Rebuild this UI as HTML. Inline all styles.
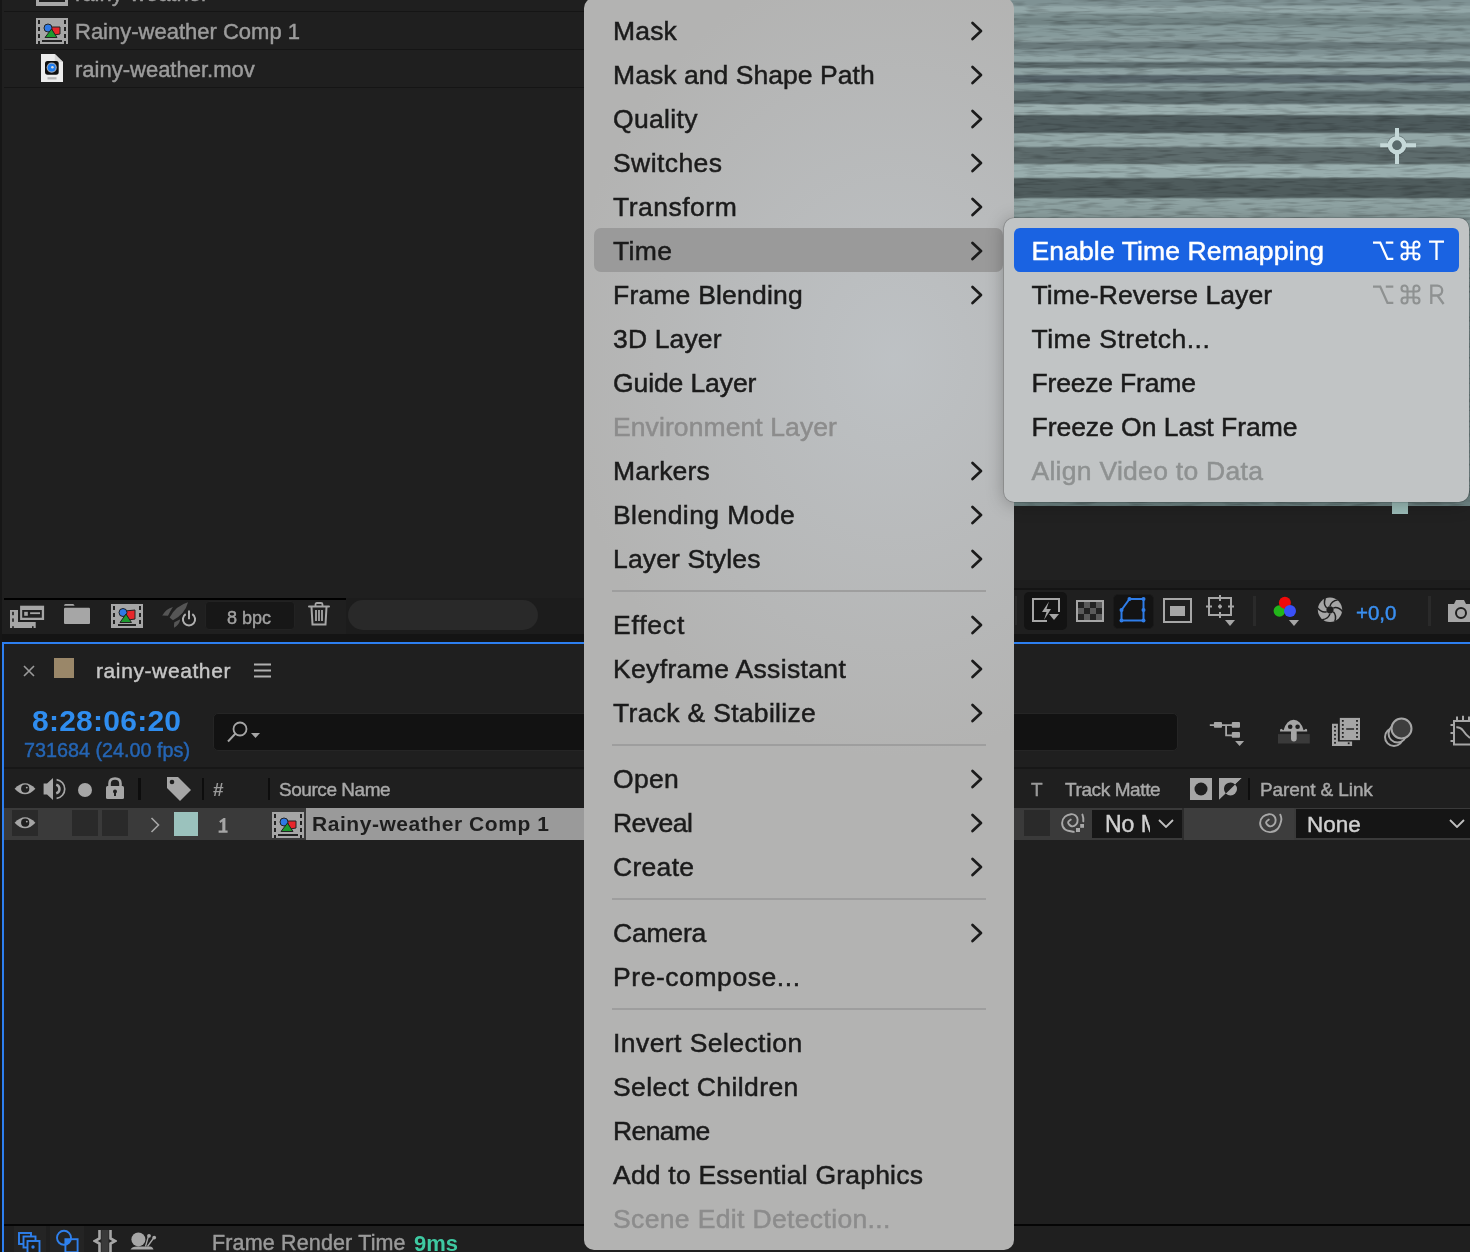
<!DOCTYPE html>
<html><head><meta charset="utf-8">
<style>
*{margin:0;padding:0;box-sizing:border-box}
html,body{width:1470px;height:1252px;overflow:hidden;background:#1f1f1f;font-family:"Liberation Sans",sans-serif}
body{will-change:transform}
.a{position:absolute}
.t{position:absolute;white-space:pre;line-height:1;-webkit-text-stroke:0.45px currentColor}
/* main menu */
#menu{position:absolute;left:584px;top:-2px;width:430px;height:1252px;border-radius:10px;background:radial-gradient(ellipse 330px 400px at 310px 360px,rgba(190,194,197,.95),rgba(190,194,197,0)),#b3b3b2;overflow:hidden}
.mi{position:absolute;left:0;width:430px;height:44px}
.mi .l{position:absolute;left:29px;top:10px;font-size:26.5px;line-height:1;color:#1b1b1b;white-space:pre;-webkit-text-stroke:0.5px currentColor}
.mi.dis .l{color:#8c8c8c}
.chev{position:absolute;left:386px;top:13px;width:14px;height:20px}
.sep{position:absolute;left:28px;width:374px;height:2px;background:#9e9e9e}
#sub{position:absolute;left:1004px;top:218px;width:465px;height:284px;border-radius:10px;background:#c1c4c5;box-shadow:0 0 0 0.6px rgba(0,0,0,.22),0 2px 18px rgba(0,0,0,.28)}
.si{position:absolute;left:10px;width:445px;height:44px;border-radius:6px}
.si .l{position:absolute;left:17.5px;top:10px;font-size:26.5px;line-height:1;color:#1b1b1b;white-space:pre;-webkit-text-stroke:0.5px currentColor}
.si .k{position:absolute;right:15px;top:10px;font-size:26px;line-height:1;color:#1b1b1b;white-space:pre}
</style></head><body>

<!-- PROJECT PANEL -->
<div class="a" style="left:0;top:0;width:2px;height:1252px;background:#161616"></div>
<div class="a" style="left:4px;top:11px;width:580px;height:1px;background:#151515"></div>
<div class="a" style="left:4px;top:49px;width:580px;height:1px;background:#151515"></div>
<div class="a" style="left:4px;top:87px;width:580px;height:1px;background:#151515"></div>
<svg class="a" style="left:36px;top:-20px" width="32" height="26" viewBox="0 0 32 26"><rect width="32" height="26" fill="#a6a6a6"/><rect x="3" y="20" width="26" height="2" fill="#1f1f1f"/></svg>
<span class="t" style="left:75px;top:-16.6px;font-size:22px;color:#9c9c9c">rainy-weather</span>
<svg class="a" style="left:36px;top:18px" width="32" height="26" viewBox="0 0 32 26">
<rect width="32" height="26" fill="#a6a6a6"/>
<rect x="2" y="2" width="2" height="4" fill="#222"/><rect x="2" y="9" width="2" height="4" fill="#222"/><rect x="2" y="16" width="2" height="4" fill="#222"/><rect x="2" y="23" width="2" height="3" fill="#222"/>
<rect x="28" y="2" width="2" height="4" fill="#222"/><rect x="28" y="9" width="2" height="4" fill="#222"/><rect x="28" y="16" width="2" height="4" fill="#222"/><rect x="28" y="23" width="2" height="3" fill="#222"/>
<rect x="6" y="22" width="20" height="2" fill="#222"/>
<path d="M15 9 L24 9 L24 16 L18 17 Z" fill="#e8262b" stroke="#222" stroke-width="1"/>
<circle cx="12" cy="10" r="4" fill="#2f79e6" stroke="#222" stroke-width="1"/>
<path d="M9 19.5 L15.5 11 L21 19.5 Z" fill="#1e9a2e" stroke="#222" stroke-width="1"/>
</svg>
<span class="t" style="left:75px;top:21.2px;font-size:22px;color:#9c9c9c">Rainy-weather Comp 1</span>
<svg class="a" style="left:41px;top:54px" width="22" height="28" viewBox="0 0 22 28">
<path d="M0 0 H13.8 L22 8 V28 H0 Z" fill="#ededed"/><path d="M13.8 0 V8 H22 Z" fill="#d6d6d6"/>
<rect x="4" y="6.9" width="13.7" height="13.8" rx="2.6" fill="#0e0e0e"/>
<circle cx="10.7" cy="13.6" r="5.1" fill="#9aa6b8"/><circle cx="10.7" cy="13.6" r="3.9" fill="#1d7cf0"/><circle cx="11.4" cy="13.2" r="1.3" fill="#d8d8d8"/>
<rect x="6.5" y="23.2" width="9" height="2.2" fill="#b5b5b5"/>
</svg>
<span class="t" style="left:75px;top:58.9px;font-size:22px;color:#9c9c9c">rainy-weather.mov</span>

<!-- project toolbar -->
<div class="a" style="left:4px;top:598px;width:342px;height:2px;background:#000"></div>
<div class="a" style="left:346px;top:598px;width:238px;height:36px;background:#1c1c1c"></div>
<div class="a" style="left:2px;top:634px;width:1468px;height:8px;background:#141414"></div>
<svg class="a" style="left:10px;top:605px" width="36" height="24" viewBox="0 0 36 24">
<g fill="#a6a6a6"><rect x="0" y="5" width="8" height="18"/><rect x="0" y="17" width="25.7" height="6"/><rect x="10.1" y="0.7" width="24" height="14.3"/></g>
<g fill="#1f1f1f"><rect x="2.2" y="6.8" width="1.6" height="3.4"/><rect x="2.2" y="13.4" width="1.6" height="3.4"/><rect x="2.2" y="21.2" width="1.6" height="1.8"/><rect x="22" y="21.2" width="1.6" height="1.8"/><rect x="12.2" y="5" width="19.6" height="7.7"/></g>
<g fill="#a6a6a6"><rect x="14.2" y="6.8" width="3.6" height="4"/><rect x="20.1" y="7.3" width="9.9" height="1.8"/></g>
</svg>
<svg class="a" style="left:64px;top:604px" width="26" height="20" viewBox="0 0 26 20"><path d="M0 1.8 Q0 0.1 1.5 0.1 H9 Q10 0.1 10.6 1.8 Z" fill="#a6a6a6"/><rect x="0" y="3.8" width="26" height="16.2" rx="1" fill="#a6a6a6"/></svg>
<svg class="a" style="left:110px;top:604px" width="34" height="24" viewBox="0 0 32 24">
<rect width="32" height="24" fill="#a6a6a6"/>
<rect x="2" y="2" width="2" height="4" fill="#222"/><rect x="2" y="9" width="2" height="4" fill="#222"/><rect x="2" y="16" width="2" height="4" fill="#222"/>
<rect x="28" y="2" width="2" height="4" fill="#222"/><rect x="28" y="9" width="2" height="4" fill="#222"/><rect x="28" y="16" width="2" height="4" fill="#222"/>
<rect x="7" y="20" width="18" height="2" fill="#222"/>
<path d="M14 7 L24 6 L24 15 L17 16 Z" fill="#e8262b" stroke="#222" stroke-width="1"/>
<circle cx="12" cy="8.5" r="4" fill="#2f79e6" stroke="#222" stroke-width="1"/>
<path d="M9 18.5 L15 10 L20.5 18.5 Z" fill="#1e9a2e" stroke="#222" stroke-width="1"/>
</svg>
<svg class="a" style="left:162px;top:602px" width="36" height="28" viewBox="0 0 36 28">
<g fill="#555">
<path d="M26 0.2 Q14 3.5 7.6 15.4 L10.9 18.3 Q23 12 26 0.2 Z"/>
<path d="M0.2 13.4 Q4 7 10.9 5 Q8 9.5 6 13.8 Z"/>
<path d="M12.1 25.8 Q11.8 22 12.4 20.2 L18.3 17.2 Q17.5 22.5 12.1 25.8 Z"/>
</g>
<path d="M23.7 12.2 A6.1 6.1 0 1 0 30.3 12.2" fill="none" stroke="#1f1f1f" stroke-width="5"/>
<path d="M27 7 V17.8" stroke="#1f1f1f" stroke-width="4.5"/>
<path d="M23.7 12.2 A6.1 6.1 0 1 0 30.3 12.2" fill="none" stroke="#b0b0b0" stroke-width="2"/>
<path d="M27 8.6 V17.2" stroke="#b0b0b0" stroke-width="2"/>
</svg>
<div class="a" style="left:205px;top:601px;width:90px;height:29px;border-radius:4px;background:#171717;border:1px solid #222"></div>
<span class="t" style="left:227px;top:609px;font-size:18px;color:#a0a0a0">8 bpc</span>
<svg class="a" style="left:308px;top:602px" width="22" height="24" viewBox="0 0 22 24">
<path d="M1 4.5 H21" stroke="#a6a6a6" stroke-width="2" stroke-linecap="round"/>
<path d="M7.5 4 V2.5 Q7.5 1 9 1 H13 Q14.5 1 14.5 2.5 V4" fill="none" stroke="#a6a6a6" stroke-width="1.8"/>
<path d="M3.5 5 L4.5 22.5 H17.5 L18.5 5" fill="none" stroke="#a6a6a6" stroke-width="2"/>
<path d="M8 8 V19 M11 8 V19 M14 8 V19" stroke="#a6a6a6" stroke-width="1.8"/>
</svg>
<div class="a" style="left:348px;top:600px;width:190px;height:30px;border-radius:15px;background:#292929"></div>

<!-- preview image -->
<div class="a" id="img" style="left:1000px;top:0;width:470px;height:506px;background:linear-gradient(to bottom,#7f9294 0px,#7f9294 5px,#93a7a8 7px,#93a7a8 12px,#7d9091 14px,#7d9091 17px,#728485 19px,#728485 24px,#869a9b 26px,#869a9b 36px,#8a9d9e 38px,#8a9d9e 41px,#6a7a7c 43px,#6a7a7c 48px,#7f9294 50px,#7f9294 54px,#90a4a5 56px,#90a4a5 61px,#5e6d6f 63px,#5e6d6f 67px,#8fa3a4 69px,#8fa3a4 74px,#56646a 76px,#56646a 82px,#869a9b 84px,#869a9b 90px,#5a696b 92px,#5a696b 103px,#9aaeae 105px,#9aaeae 114px,#4e5b5d 116px,#4e5b5d 132px,#93a7a7 134px,#93a7a7 146px,#5d6b6c 148px,#5d6b6c 163px,#98adad 165px,#98adad 177px,#4f5c5d 179px,#4f5c5d 197px,#8fa3a3 199px,#8fa3a3 216px,#8a9d9e 218px,#8a9d9e 489px,#6f8585 491px,#6f8585 505px)"></div>
<svg class="a" style="left:1000px;top:0" width="470" height="506"><filter id="nz" x="0" y="0" width="100%" height="100%"><feTurbulence type="fractalNoise" baseFrequency="0.04 0.35" numOctaves="2" seed="7"/><feColorMatrix values="0 0 0 0 0  0 0 0 0 0  0 0 0 0 0  0 0 0 -1.6 0.85"/></filter><rect width="470" height="506" filter="url(#nz)" opacity="0.35"/></svg>
<svg class="a" style="left:1379px;top:127px" width="38" height="38" viewBox="0 0 38 38"><g stroke="#3a4648" stroke-opacity=".5" stroke-width="6" fill="none"><circle cx="18" cy="18.2" r="7"/></g><path d="M18 1 V11 M18 25.5 V37 M1.2 18.2 H11 M25 18.2 H37" stroke="#c5d8d8" stroke-width="4"/><circle cx="18" cy="18.2" r="7" fill="none" stroke="#c5d8d8" stroke-width="4.6"/><circle cx="18" cy="18.2" r="4.6" fill="#5a6a6c"/></svg>
<!-- viewer toolbar -->
<div class="a" style="left:1014px;top:506px;width:456px;height:82px;background:#212121"></div>
<div class="a" style="left:1392px;top:502px;width:16px;height:12px;background:#9bbcb8"></div>
<div class="a" style="left:1014px;top:580px;width:456px;height:8px;background:#1d1d1d"></div>
<div class="a" style="left:1014px;top:588px;width:456px;height:2px;background:#141414"></div>
<div class="a" style="left:1014px;top:590px;width:456px;height:44px;background:#1f1f1f"></div>
<div class="a" style="left:1015px;top:596px;width:2px;height:29px;background:#2a2a2a"></div>
<div class="a" style="left:1024px;top:592px;width:43px;height:38px;border-radius:5px;background:#131313"></div>
<svg class="a" style="left:1032px;top:598px" width="30" height="26" viewBox="0 0 30 26">
<path d="M15 23 H1 V1 H27 V14" fill="none" stroke="#a6a6a6" stroke-width="2"/>
<path d="M17 3.5 L10 14 H14.5 L12 22 L19 11 H14.5 Z" fill="#a6a6a6"/>
<path d="M17 16 H27 L22 22 Z" fill="#a6a6a6"/>
</svg>
<svg class="a" style="left:1076px;top:600px" width="28" height="22" viewBox="0 0 28 22">
<rect x="1" y="1" width="26" height="20" fill="#222" stroke="#a6a6a6" stroke-width="2"/>
<rect x="8" y="2" width="6" height="6" fill="#5a5a5a"/><rect x="20" y="2" width="6" height="6" fill="#5a5a5a"/>
<rect x="2" y="8" width="6" height="6" fill="#5a5a5a"/><rect x="14" y="8" width="6" height="6" fill="#5a5a5a"/>
<rect x="8" y="14" width="6" height="6" fill="#5a5a5a"/><rect x="20" y="14" width="6" height="6" fill="#5a5a5a"/>
</svg>
<div class="a" style="left:1113px;top:594px;width:41px;height:35px;border-radius:5px;background:#131313;border:1px solid #1a1a1a"></div>
<svg class="a" style="left:1119px;top:596px" width="30" height="28" viewBox="0 0 30 28">
<path d="M2.5 24.5 V14 L10.5 3 H24.5 V24.5 Z" fill="none" stroke="#2f7de8" stroke-width="2"/>
<circle cx="2.5" cy="24.5" r="2" fill="#2f7de8"/><circle cx="2.5" cy="14" r="2" fill="#2f7de8"/><circle cx="10.5" cy="3" r="2" fill="#2f7de8"/><circle cx="24.5" cy="3" r="2" fill="#2f7de8"/><circle cx="24.5" cy="14" r="2" fill="#2f7de8"/><circle cx="24.5" cy="24.5" r="2" fill="#2f7de8"/>
</svg>
<svg class="a" style="left:1163px;top:598px" width="30" height="25" viewBox="0 0 30 25"><rect x="1" y="1" width="27" height="23" fill="none" stroke="#a6a6a6" stroke-width="2"/><rect x="7" y="8" width="15" height="10" fill="#a6a6a6"/></svg>
<svg class="a" style="left:1206px;top:595px" width="30" height="32" viewBox="0 0 30 32">
<rect x="3" y="3" width="22" height="17" fill="none" stroke="#a6a6a6" stroke-width="2"/>
<path d="M14 0 V6 M14 17 V23 M0 11.5 H6 M22 11.5 H28 M14 9.5 V13.5 M12 11.5 H16" stroke="#a6a6a6" stroke-width="2"/>
<path d="M19 25 H29 L24 31 Z" fill="#a6a6a6"/>
</svg>
<div class="a" style="left:1253px;top:596px;width:3px;height:30px;background:#2a2a2a"></div>
<svg class="a" style="left:1272px;top:595px" width="34" height="32" viewBox="0 0 34 32"><circle cx="7.4" cy="16" r="5.8" fill="#22b51a"/><circle cx="12.9" cy="7.8" r="6" fill="#f00a0a"/><circle cx="18" cy="16" r="6" fill="#3a50f8"/><path d="M16.9 24.9 H27 L22 30.9 Z" fill="#a6a6a6"/></svg>
<svg class="a" style="left:1317px;top:597px" width="26" height="26" viewBox="0 0 26 26"><circle cx="13" cy="12.8" r="12.2" fill="#a6a6a6"/><g stroke="#1f1f1f" stroke-width="1.5" fill="none"><path d="M9.71 10.90 Q6.01 7.14 8.28 1.12"/><path d="M13.00 9.00 Q14.41 3.91 20.76 2.87"/><path d="M16.29 10.90 Q21.40 9.57 25.48 14.55"/><path d="M16.29 14.70 Q19.99 18.46 17.72 24.48"/><path d="M13.00 16.60 Q11.59 21.69 5.24 22.73"/><path d="M9.71 14.70 Q4.60 16.03 0.52 11.05"/></g><circle cx="13" cy="12.8" r="3.6" fill="#1f1f1f"/></svg>
<span class="t" style="left:1356px;top:603px;font-size:20.5px;color:#3a8ff0">+0,0</span>
<div class="a" style="left:1428px;top:596px;width:3px;height:30px;background:#2a2a2a"></div>
<svg class="a" style="left:1448px;top:599px" width="22" height="24" viewBox="0 0 22 24"><path d="M0 5 H6 L8 1 H16 L18 5 H26 V23 H0 Z" fill="#a6a6a6"/><circle cx="13" cy="14" r="5" fill="none" stroke="#1f1f1f" stroke-width="2"/></svg>

<!-- TIMELINE -->
<div class="a" style="left:2px;top:642px;width:1468px;height:2px;background:#2d7ff0"></div>
<div class="a" style="left:2px;top:642px;width:2px;height:610px;background:#2d7ff0"></div>
<svg class="a" style="left:23px;top:665px" width="12" height="12" viewBox="0 0 12 12"><path d="M1 1 L11 11 M11 1 L1 11" stroke="#9a9a9a" stroke-width="1.6"/></svg>
<div class="a" style="left:54px;top:658px;width:20px;height:20px;background:#9a8769"></div>
<span class="t" style="left:96px;top:660px;font-size:21px;letter-spacing:0.6px;color:#c6c6c6">rainy-weather</span>
<svg class="a" style="left:254px;top:663px" width="17" height="15" viewBox="0 0 17 15"><path d="M0 1.5 H17 M0 7.5 H17 M0 13.5 H17" stroke="#b0b0b0" stroke-width="2"/></svg>
<span class="t" style="-webkit-text-stroke:0;left:32px;top:706px;font-size:30px;font-weight:bold;letter-spacing:0.25px;color:#2f8def">8:28:06:20</span>
<span class="t" style="left:24px;top:741px;font-size:19.8px;color:#2565b4">731684 (24.00 fps)</span>
<div class="a" style="left:213px;top:713px;width:965px;height:38px;border-radius:5px;background:#121212;border:1px solid #252525"></div>
<svg class="a" style="left:226px;top:720px" width="36" height="24" viewBox="0 0 36 24"><circle cx="14" cy="9" r="6.5" fill="none" stroke="#a6a6a6" stroke-width="1.8"/><path d="M9.5 13.5 L2 21.5" stroke="#a6a6a6" stroke-width="2"/><path d="M25 13 H34 L29.5 18 Z" fill="#a6a6a6"/></svg>
<svg class="a" style="left:1209px;top:720px" width="36" height="27" viewBox="0 0 36 27">
<path d="M0.8 5.1 H31 M17.1 5.1 V15.3 H23" stroke="#a6a6a6" stroke-width="1.8" fill="none"/>
<rect x="4.9" y="2.1" width="8.1" height="5.7" rx="1" fill="#a6a6a6"/><rect x="22.8" y="2.1" width="8.2" height="5.7" rx="1" fill="#a6a6a6"/><rect x="22.8" y="12" width="8.2" height="5.8" rx="1" fill="#a6a6a6"/>
<path d="M26.1 20.9 H35.1 L30.6 25.9 Z" fill="#a6a6a6"/>
</svg>
<svg class="a" style="left:1277px;top:719px" width="34" height="25" viewBox="0 0 34 25">
<rect x="1" y="15.1" width="31.8" height="9.4" fill="#3a3a3a"/>
<path d="M3 12.6 Q2.6 9.6 4.6 9.9 Q5.6 10.6 6.6 11.3 Q9.5 0.9 16.6 0.8 Q23.7 0.9 26.6 11.3 Q27.6 10.6 28.6 9.9 Q30.6 9.6 30.2 12.6 Z" fill="#a6a6a6"/>
<circle cx="13.2" cy="7.7" r="2.3" fill="#1f1f1f"/><circle cx="20.6" cy="7.7" r="2.3" fill="#1f1f1f"/>
<rect x="14" y="10" width="5.7" height="12.4" rx="2.85" fill="#a6a6a6"/>
</svg>
<svg class="a" style="left:1332px;top:717px" width="29" height="30" viewBox="0 0 29 30">
<path d="M0 6.8 H5.9 V24.6 H20.1 V29 H0 Z" fill="#a6a6a6"/>
<rect x="7.8" y="0.9" width="20.2" height="22.2" fill="#a6a6a6"/>
<g fill="#1f1f1f"><rect x="2.1" y="8.9" width="1.8" height="1.8"/><rect x="2.1" y="12.9" width="1.8" height="1.8"/><rect x="2.1" y="16.9" width="1.8" height="1.8"/><rect x="2.1" y="20.9" width="1.8" height="1.8"/><rect x="2.1" y="24.9" width="1.8" height="1.8"/><rect x="15.8" y="25.4" width="1.8" height="1.8"/><rect x="9.9" y="3" width="1.8" height="1.8"/><rect x="9.9" y="7" width="1.8" height="1.8"/><rect x="9.9" y="11" width="1.8" height="1.8"/><rect x="9.9" y="15" width="1.8" height="1.8"/><rect x="9.9" y="19" width="1.8" height="1.8"/><rect x="24.1" y="3" width="1.8" height="1.8"/><rect x="24.1" y="7" width="1.8" height="1.8"/><rect x="24.1" y="11" width="1.8" height="1.8"/><rect x="24.1" y="15" width="1.8" height="1.8"/><rect x="24.1" y="19" width="1.8" height="1.8"/><rect x="14.2" y="11.3" width="7.9" height="1.4"/></g>
</svg>
<svg class="a" style="left:1383px;top:717px" width="30" height="30" viewBox="0 0 30 30">
<circle cx="11" cy="20" r="9" fill="#1f1f1f" stroke="#a6a6a6" stroke-width="2"/>
<circle cx="14.5" cy="16.5" r="9" fill="#1f1f1f" stroke="#a6a6a6" stroke-width="2"/>
<circle cx="18.5" cy="11.5" r="10" fill="#3e3e3e" stroke="#a6a6a6" stroke-width="2"/>
</svg>
<svg class="a" style="left:1450px;top:715px" width="20" height="31" viewBox="0 0 20 31">
<rect x="4" y="6" width="26" height="23.5" fill="none" stroke="#a6a6a6" stroke-width="2"/>
<path d="M0.5 10 H4 M0.5 18 H4 M0.5 26 H4 M7 1.5 V6 M13 0.8 V6 M19 1.5 V6" stroke="#a6a6a6" stroke-width="2"/>
<path d="M6.3 12.3 Q10.5 12 13 15.5 Q16 20 20 23" fill="none" stroke="#a6a6a6" stroke-width="2"/>
</svg>
<div class="a" style="left:4px;top:767px;width:1466px;height:2px;background:#171717"></div>
<!-- header row -->
<svg class="a" style="left:14px;top:782px" width="22" height="14" viewBox="0 0 22 14"><path d="M0.6 6.8 Q11 -4.2 21.4 6.8 Q11 17.8 0.6 6.8 Z" fill="#a6a6a6"/><circle cx="11.2" cy="6.7" r="4.1" fill="#1f1f1f"/><circle cx="12.8" cy="5.6" r="0.95" fill="#a6a6a6"/></svg>
<svg class="a" style="left:43px;top:777px" width="25" height="24" viewBox="0 0 25 24"><path d="M0.6 6.5 H4 L10 1 V23 L4 17.5 H0.6 Z" fill="#a6a6a6"/><path d="M13.2 7.6 A4.6 4.6 0 0 1 13.2 16.4" fill="none" stroke="#a6a6a6" stroke-width="2.5"/><path d="M13.6 2.6 A9.5 9.5 0 0 1 13.6 21.4" fill="none" stroke="#a6a6a6" stroke-width="1.7"/></svg>
<div class="a" style="left:77.5px;top:782.5px;width:14px;height:14px;border-radius:7px;background:#a6a6a6"></div>
<svg class="a" style="left:105px;top:777px" width="20" height="22" viewBox="0 0 20 22"><path d="M4.5 10 V6.5 Q4.5 1.5 10 1.5 Q15.5 1.5 15.5 6.5 V10" fill="none" stroke="#a6a6a6" stroke-width="2.6"/><rect x="1" y="9" width="18" height="13" rx="1.5" fill="#a6a6a6"/><circle cx="10" cy="14.5" r="2" fill="#1f1f1f"/><rect x="9" y="15" width="2" height="4" fill="#1f1f1f"/></svg>
<div class="a" style="left:138px;top:778px;width:3px;height:22px;background:#0d0d0d"></div>
<svg class="a" style="left:167px;top:777px" width="24" height="24" viewBox="0 0 24 24"><path d="M0 0 H11 L24 13 L13 24 L0 11 Z" fill="#a6a6a6"/><circle cx="5" cy="5" r="2.3" fill="#1f1f1f"/></svg>
<div class="a" style="left:202px;top:778px;width:2px;height:22px;background:#0d0d0d"></div>
<span class="t" style="-webkit-text-stroke:0;left:213px;top:780px;font-size:19px;font-weight:bold;color:#9a9a9a">#</span>
<div class="a" style="left:268px;top:778px;width:2px;height:22px;background:#0d0d0d"></div>
<span class="t" style="left:279px;top:780px;font-size:19px;letter-spacing:-0.45px;color:#a8a8a8">Source Name</span>
<span class="t" style="left:1031px;top:780px;font-size:19px;color:#9a9a9a">T</span>
<span class="t" style="left:1065px;top:780px;font-size:19px;letter-spacing:-0.4px;color:#a8a8a8">Track Matte</span>
<svg class="a" style="left:1190px;top:778px" width="22" height="22" viewBox="0 0 22 22"><rect width="22" height="22" fill="#a6a6a6"/><circle cx="11" cy="11" r="6.5" fill="#1f1f1f"/></svg>
<svg class="a" style="left:1219px;top:778px" width="23" height="22" viewBox="0 0 23 22"><path d="M0 0 H23 L0 22 Z" fill="#a6a6a6"/><path d="M23 0 V22 H0 Z" fill="#1f1f1f"/><circle cx="11.5" cy="11" r="6.5" fill="#a6a6a6"/><path d="M5 11 A6.5 6.5 0 0 1 16.1 6.4 L6.9 15.6 A6.5 6.5 0 0 1 5 11 Z" fill="#1f1f1f"/><path d="M0 22 L23 0" stroke="#1f1f1f" stroke-width="0"/></svg>
<div class="a" style="left:1248px;top:778px;width:2px;height:22px;background:#0d0d0d"></div>
<span class="t" style="left:1260px;top:780px;font-size:19px;letter-spacing:-0.1px;color:#a8a8a8">Parent &amp; Link</span>
<!-- layer row -->
<div class="a" style="left:4px;top:808px;width:1466px;height:32px;background:#3a3a3a"></div>
<div class="a" style="left:12px;top:810px;width:26px;height:26px;background:#2a2a2a"></div>
<svg class="a" style="left:14px;top:816px" width="22" height="14" viewBox="0 0 22 14"><path d="M0.6 6.8 Q11 -4.2 21.4 6.8 Q11 17.8 0.6 6.8 Z" fill="#a6a6a6"/><circle cx="11.2" cy="6.7" r="4.1" fill="#1f1f1f"/><circle cx="12.8" cy="5.6" r="0.95" fill="#a6a6a6"/></svg>
<div class="a" style="left:72px;top:810px;width:26px;height:26px;background:#2a2a2a"></div>
<div class="a" style="left:102px;top:810px;width:26px;height:26px;background:#2a2a2a"></div>
<svg class="a" style="left:150px;top:817px" width="10" height="16" viewBox="0 0 10 16"><path d="M1.5 1 L8.5 8 L1.5 15" fill="none" stroke="#a6a6a6" stroke-width="1.6"/></svg>
<div class="a" style="left:174px;top:812px;width:24px;height:24px;background:#9bc2bd"></div>
<svg class="a" style="left:217.5px;top:816.5px" width="10" height="16" viewBox="0 0 10 16"><path d="M1.2 4.2 L5.6 0.9 H7.4 V13.4 H9.6 V15.8 H0.6 V13.4 H4.3 V4.6 L2.4 6 Z" fill="#a6a6a6"/></svg>
<svg class="a" style="left:272px;top:812px" width="32" height="26" viewBox="0 0 32 26">
<rect width="32" height="26" fill="#a6a6a6"/>
<rect x="2" y="2" width="2" height="4" fill="#222"/><rect x="2" y="9" width="2" height="4" fill="#222"/><rect x="2" y="16" width="2" height="4" fill="#222"/><rect x="2" y="23" width="2" height="3" fill="#222"/>
<rect x="28" y="2" width="2" height="4" fill="#222"/><rect x="28" y="9" width="2" height="4" fill="#222"/><rect x="28" y="16" width="2" height="4" fill="#222"/><rect x="28" y="23" width="2" height="3" fill="#222"/>
<rect x="6" y="22" width="20" height="2" fill="#222"/>
<path d="M15 9 L24 9 L24 16 L18 17 Z" fill="#e8262b" stroke="#222" stroke-width="1"/>
<circle cx="12" cy="10" r="4" fill="#2f79e6" stroke="#222" stroke-width="1"/>
<path d="M9 19.5 L15.5 11 L21 19.5 Z" fill="#1e9a2e" stroke="#222" stroke-width="1"/>
</svg>
<div class="a" style="left:306px;top:808px;width:278px;height:32px;background:#9a9a9a"></div>
<span class="t" style="-webkit-text-stroke:0;left:312px;top:813px;font-size:21px;font-weight:bold;letter-spacing:0.55px;color:#1e1e1e">Rainy-weather Comp 1</span>
<div class="a" style="left:1024px;top:810px;width:26px;height:26px;background:#2a2a2a"></div>
<svg class="a" style="left:1052px;top:806px" width="40" height="34" viewBox="0 0 40 34"><path d="M18.8 13.6 C18.3 14.1 15.9 15.5 16.1 16.6 C16.2 17.7 18.2 20.0 19.6 20.3 C21.0 20.6 23.2 19.5 24.2 18.4 C25.2 17.3 25.7 15.1 25.6 13.6 C25.5 12.1 24.6 10.5 23.5 9.6 C22.4 8.7 20.8 8.0 19.0 8.2 C17.2 8.4 14.5 9.2 13.0 10.6 C11.5 12.0 10.1 14.7 10.1 16.9 C10.1 19.1 11.2 22.1 13.2 23.6 C15.1 25.1 20.4 25.5 21.8 25.9" fill="none" stroke="#a8a8a8" stroke-width="1.9" stroke-linecap="round"/><path d="M30.4 8.6 Q31.6 11.5 31.3 15.4" fill="none" stroke="#a8a8a8" stroke-width="1.9" stroke-linecap="round"/><rect x="24" y="22" width="4" height="4" fill="#a8a8a8"/><rect x="28.2" y="18" width="3.8" height="3.8" fill="#a8a8a8"/></svg>
<div class="a" style="left:1092px;top:810px;width:90px;height:28px;background:#161616"></div>
<div class="a" style="left:1100px;top:810px;width:50px;height:28px;overflow:hidden"><span class="t" style="left:5px;top:3px;font-size:23px;color:#d0d0d0">No M</span></div>
<svg class="a" style="left:1158px;top:819px" width="16" height="9" viewBox="0 0 16 9"><path d="M1 1 L8 8 L15 1" fill="none" stroke="#c0c0c0" stroke-width="1.8"/></svg>
<div class="a" style="left:1182px;top:808px;width:2px;height:32px;background:#2c2c2c"></div>
<div class="a" style="left:1184px;top:808px;width:110px;height:32px;background:#3d3d3d"></div>
<svg class="a" style="left:1250px;top:806px" width="40" height="34" viewBox="0 0 40 34"><path d="M18.8 13.6 C18.3 14.1 15.9 15.5 16.1 16.6 C16.2 17.7 18.2 20.0 19.6 20.3 C21.0 20.6 23.2 19.5 24.2 18.4 C25.2 17.3 25.7 15.1 25.6 13.6 C25.5 12.1 24.6 10.5 23.5 9.6 C22.4 8.7 20.8 8.0 19.0 8.2 C17.2 8.4 14.5 9.2 13.0 10.6 C11.5 12.0 10.1 14.7 10.1 16.9 C10.1 19.1 11.5 22.1 13.2 23.6 C14.9 25.1 17.7 26.2 20.1 26.1 C22.5 26.0 25.6 25.0 27.5 23.0 C29.4 21.0 30.8 16.5 31.3 14.1 C31.8 11.7 30.5 9.5 30.3 8.6" fill="none" stroke="#a8a8a8" stroke-width="1.9" stroke-linecap="round"/></svg>
<div class="a" style="left:1296px;top:809px;width:174px;height:29px;background:#151515"></div>
<span class="t" style="left:1307px;top:814px;font-size:22.5px;color:#d0d0d0">None</span>
<svg class="a" style="left:1449px;top:819px" width="16" height="9" viewBox="0 0 16 9"><path d="M1 1 L8 8 L15 1" fill="none" stroke="#c0c0c0" stroke-width="1.8"/></svg>
<!-- bottom bar -->
<div class="a" style="left:4px;top:1224px;width:1466px;height:2px;background:#050505"></div>
<div class="a" style="left:14px;top:1226px;width:32px;height:26px;background:#242424"></div>
<div class="a" style="left:50px;top:1226px;width:34px;height:26px;background:#242424"></div>
<svg class="a" style="left:17px;top:1231px" width="25" height="21" viewBox="0 0 25 21"><g fill="#1f1f1f" stroke="#2f80ed" stroke-width="1.9"><rect x="2" y="2" width="12" height="11"/><rect x="6.5" y="5.5" width="12" height="11"/><rect x="10.5" y="10" width="12" height="13"/></g><circle cx="16" cy="16" r="1.7" fill="#2f80ed"/></svg>
<svg class="a" style="left:55px;top:1229px" width="25" height="23" viewBox="0 0 25 23"><circle cx="9" cy="8.8" r="7" fill="none" stroke="#2f80ed" stroke-width="1.9"/><rect x="10.4" y="10.2" width="12.2" height="13" fill="none" stroke="#2f80ed" stroke-width="1.9"/><path d="M10.4 10.2 H15.8 A7 7 0 0 1 10.4 15.6 Z" fill="#2f80ed"/></svg>
<svg class="a" style="left:93px;top:1230px" width="24" height="22" viewBox="0 0 24 22"><rect x="8.4" y="0" width="7.2" height="22" fill="#3a3a3a"/><g fill="none" stroke="#a6a6a6" stroke-width="2.6" stroke-linejoin="miter"><path d="M6.5 0 V8.5 L2 11 L6.5 13.5 V22"/><path d="M17.5 0 V8.5 L22 11 L17.5 13.5 V22"/></g></svg>
<svg class="a" style="left:129px;top:1230px" width="28" height="22" viewBox="0 0 28 22"><circle cx="9.4" cy="9.4" r="7" fill="#a6a6a6"/><path d="M1.5 19.5 Q3 16.5 8 16.5 H21 Q23.5 16.5 24.5 19.5 Z" fill="#a6a6a6"/><path d="M16.5 16.5 L19.5 6 M18.5 16.5 L25 7.5" stroke="#a6a6a6" stroke-width="1.3"/><circle cx="20" cy="5.8" r="1.9" fill="#a6a6a6"/><circle cx="25.2" cy="7.6" r="1.9" fill="#a6a6a6"/></svg>
<span class="t" style="left:212px;top:1233px;font-size:21.5px;letter-spacing:0.15px;color:#9a9a9a">Frame Render Time</span>
<span class="t" style="-webkit-text-stroke:0;left:414px;top:1233px;font-size:22px;font-weight:bold;color:#3ec9a2">9ms</span>

<!-- main menu -->
<!--MENU--><div id="menu">
<div class="mi" style="top:10px"><span class="l" style="letter-spacing:0.167px">Mask</span><svg class="chev" viewBox="0 0 14 20"><path d="M2.5 2 L11 10 L2.5 18" fill="none" stroke="#1b1b1b" stroke-width="2.7" stroke-linecap="round" stroke-linejoin="round"/></svg></div>
<div class="mi" style="top:54px"><span class="l" style="letter-spacing:0.056px">Mask and Shape Path</span><svg class="chev" viewBox="0 0 14 20"><path d="M2.5 2 L11 10 L2.5 18" fill="none" stroke="#1b1b1b" stroke-width="2.7" stroke-linecap="round" stroke-linejoin="round"/></svg></div>
<div class="mi" style="top:98px"><span class="l" style="letter-spacing:0.333px">Quality</span><svg class="chev" viewBox="0 0 14 20"><path d="M2.5 2 L11 10 L2.5 18" fill="none" stroke="#1b1b1b" stroke-width="2.7" stroke-linecap="round" stroke-linejoin="round"/></svg></div>
<div class="mi" style="top:142px"><span class="l" style="letter-spacing:0.429px">Switches</span><svg class="chev" viewBox="0 0 14 20"><path d="M2.5 2 L11 10 L2.5 18" fill="none" stroke="#1b1b1b" stroke-width="2.7" stroke-linecap="round" stroke-linejoin="round"/></svg></div>
<div class="mi" style="top:186px"><span class="l" style="letter-spacing:0.500px">Transform</span><svg class="chev" viewBox="0 0 14 20"><path d="M2.5 2 L11 10 L2.5 18" fill="none" stroke="#1b1b1b" stroke-width="2.7" stroke-linecap="round" stroke-linejoin="round"/></svg></div>
<div class="mi" style="top:230px"><div class="a" style="left:10px;top:0;width:409px;height:44px;border-radius:7px;background:#9a9a9a"></div><span class="l" style="letter-spacing:0.333px">Time</span><svg class="chev" viewBox="0 0 14 20"><path d="M2.5 2 L11 10 L2.5 18" fill="none" stroke="#1b1b1b" stroke-width="2.7" stroke-linecap="round" stroke-linejoin="round"/></svg></div>
<div class="mi" style="top:274px"><span class="l" style="letter-spacing:0.200px">Frame Blending</span><svg class="chev" viewBox="0 0 14 20"><path d="M2.5 2 L11 10 L2.5 18" fill="none" stroke="#1b1b1b" stroke-width="2.7" stroke-linecap="round" stroke-linejoin="round"/></svg></div>
<div class="mi" style="top:318px"><span class="l" style="letter-spacing:0.143px">3D Layer</span></div>
<div class="mi" style="top:362px"><span class="l" style="letter-spacing:-0.100px">Guide Layer</span></div>
<div class="mi dis" style="top:406px"><span class="l" style="letter-spacing:0.094px">Environment Layer</span></div>
<div class="mi" style="top:450px"><span class="l" style="letter-spacing:0.167px">Markers</span><svg class="chev" viewBox="0 0 14 20"><path d="M2.5 2 L11 10 L2.5 18" fill="none" stroke="#1b1b1b" stroke-width="2.7" stroke-linecap="round" stroke-linejoin="round"/></svg></div>
<div class="mi" style="top:494px"><span class="l" style="letter-spacing:0.417px">Blending Mode</span><svg class="chev" viewBox="0 0 14 20"><path d="M2.5 2 L11 10 L2.5 18" fill="none" stroke="#1b1b1b" stroke-width="2.7" stroke-linecap="round" stroke-linejoin="round"/></svg></div>
<div class="mi" style="top:538px"><span class="l" style="letter-spacing:0.145px">Layer Styles</span><svg class="chev" viewBox="0 0 14 20"><path d="M2.5 2 L11 10 L2.5 18" fill="none" stroke="#1b1b1b" stroke-width="2.7" stroke-linecap="round" stroke-linejoin="round"/></svg></div>
<div class="sep" style="top:592px"></div>
<div class="mi" style="top:604px"><span class="l" style="letter-spacing:0.800px">Effect</span><svg class="chev" viewBox="0 0 14 20"><path d="M2.5 2 L11 10 L2.5 18" fill="none" stroke="#1b1b1b" stroke-width="2.7" stroke-linecap="round" stroke-linejoin="round"/></svg></div>
<div class="mi" style="top:648px"><span class="l" style="letter-spacing:0.353px">Keyframe Assistant</span><svg class="chev" viewBox="0 0 14 20"><path d="M2.5 2 L11 10 L2.5 18" fill="none" stroke="#1b1b1b" stroke-width="2.7" stroke-linecap="round" stroke-linejoin="round"/></svg></div>
<div class="mi" style="top:692px"><span class="l" style="letter-spacing:0.312px">Track &amp; Stabilize</span><svg class="chev" viewBox="0 0 14 20"><path d="M2.5 2 L11 10 L2.5 18" fill="none" stroke="#1b1b1b" stroke-width="2.7" stroke-linecap="round" stroke-linejoin="round"/></svg></div>
<div class="sep" style="top:746px"></div>
<div class="mi" style="top:758px"><span class="l" style="letter-spacing:0.333px">Open</span><svg class="chev" viewBox="0 0 14 20"><path d="M2.5 2 L11 10 L2.5 18" fill="none" stroke="#1b1b1b" stroke-width="2.7" stroke-linecap="round" stroke-linejoin="round"/></svg></div>
<div class="mi" style="top:802px"><span class="l" style="letter-spacing:-0.540px">Reveal</span><svg class="chev" viewBox="0 0 14 20"><path d="M2.5 2 L11 10 L2.5 18" fill="none" stroke="#1b1b1b" stroke-width="2.7" stroke-linecap="round" stroke-linejoin="round"/></svg></div>
<div class="mi" style="top:846px"><span class="l" style="letter-spacing:0.300px">Create</span><svg class="chev" viewBox="0 0 14 20"><path d="M2.5 2 L11 10 L2.5 18" fill="none" stroke="#1b1b1b" stroke-width="2.7" stroke-linecap="round" stroke-linejoin="round"/></svg></div>
<div class="sep" style="top:900px"></div>
<div class="mi" style="top:912px"><span class="l" style="letter-spacing:-0.200px">Camera</span><svg class="chev" viewBox="0 0 14 20"><path d="M2.5 2 L11 10 L2.5 18" fill="none" stroke="#1b1b1b" stroke-width="2.7" stroke-linecap="round" stroke-linejoin="round"/></svg></div>
<div class="mi" style="top:956px"><span class="l" style="letter-spacing:0.569px">Pre-compose...</span></div>
<div class="sep" style="top:1010px"></div>
<div class="mi" style="top:1022px"><span class="l" style="letter-spacing:0.433px">Invert Selection</span></div>
<div class="mi" style="top:1066px"><span class="l" style="letter-spacing:0.400px">Select Children</span></div>
<div class="mi" style="top:1110px"><span class="l" style="letter-spacing:-0.600px">Rename</span></div>
<div class="mi" style="top:1154px"><span class="l" style="letter-spacing:0.208px">Add to Essential Graphics</span></div>
<div class="mi dis" style="top:1198px"><span class="l" style="letter-spacing:0.355px">Scene Edit Detection...</span></div>
</div>

<div id="sub">
<div class="si" style="top:10px;background:#1a63e2;"><span class="l" style="color:#ffffff;letter-spacing:0.120px">Enable Time Remapping</span><svg class="a" style="left:358px;top:12px" width="74" height="22" viewBox="0 0 74 22"><g fill="none" stroke="#ffffff" stroke-width="2.3" stroke-linejoin="miter"><path d="M1 2.6 H8.2 L15.5 18.9 H21.3 M13.8 2.6 H21.3"/><path d="M35.5 7.5 V4.5 A3 3 0 1 0 32.5 7.5 H44.5 A3 3 0 1 0 41.5 4.5 V16.5 A3 3 0 1 0 44.5 13.5 H32.5 A3 3 0 1 0 35.5 16.5 Z" stroke-width="2.1"/><path d="M57 1.7 H72 M64.5 1.7 V20" /></g></svg></div>
<div class="si" style="top:54px;"><span class="l" style="color:#1b1b1b;letter-spacing:0.088px">Time-Reverse Layer</span><svg class="a" style="left:358px;top:12px" width="74" height="22" viewBox="0 0 74 22"><g fill="none" stroke="#8e9191" stroke-width="2.3" stroke-linejoin="miter"><path d="M1 2.6 H8.2 L15.5 18.9 H21.3 M13.8 2.6 H21.3"/><path d="M35.5 7.5 V4.5 A3 3 0 1 0 32.5 7.5 H44.5 A3 3 0 1 0 41.5 4.5 V16.5 A3 3 0 1 0 44.5 13.5 H32.5 A3 3 0 1 0 35.5 16.5 Z" stroke-width="2.1"/><path d="M59.3 20 V1.7 H65.3 A4.9 4.9 0 0 1 65.3 11.5 H59.3 M65.5 11.5 L71.6 20"/></g></svg></div>
<div class="si" style="top:98px;"><span class="l" style="color:#1b1b1b;letter-spacing:0.500px">Time Stretch...</span></div>
<div class="si" style="top:142px;"><span class="l" style="color:#1b1b1b;letter-spacing:-0.182px">Freeze Frame</span></div>
<div class="si" style="top:186px;"><span class="l" style="color:#1b1b1b;letter-spacing:-0.032px">Freeze On Last Frame</span></div>
<div class="si" style="top:230px;"><span class="l" style="color:#8e9191;letter-spacing:0.278px">Align Video to Data</span></div>
</div><!--/MENU-->

</body></html>
